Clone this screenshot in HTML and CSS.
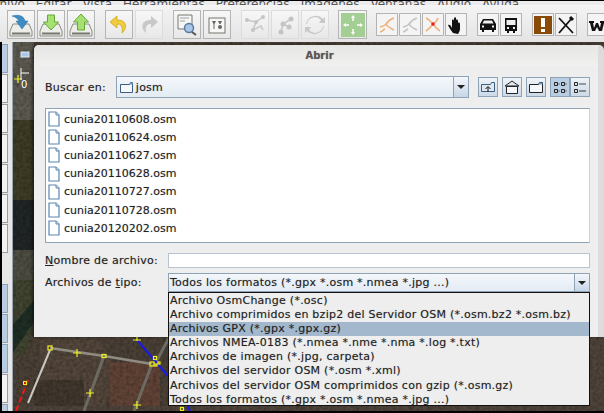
FILE: index.html
```html
<!DOCTYPE html>
<html lang="es">
<head>
    <meta charset="UTF-8">
    <meta name="viewport" content="width=device-width, initial-scale=1.0">
    <title>JOSM - Abrir</title>
    <link rel="stylesheet" href="styles.css">
</head>
<body>

    <svg class="defs" width="0" height="0">
        <symbol id="file" viewBox="0 0 12 16">
            <path d="M1 1h7l3 3v11H1z" fill="#fff" stroke="#5d86b0" stroke-width="1.2"/>
            <path d="M8 1v3h3" fill="#dfe8f2" stroke="#5d86b0"/>
        </symbol>
        <symbol id="drive" viewBox="0 0 26 26">
            <path d="M5 12h16l3 7v5H2v-5z" fill="#ecece8" stroke="#8c8c84"/>
            <rect x="4" y="20.500" width="18" height="2" fill="#77776f"/>
        </symbol>
        <symbol id="split" viewBox="0 0 20 20">
            <path d="M17 3c-3 1-6 3-8 6-1 2-3 2-6 3M9 9c1 2 4 4 8 6M3 17c2 0 3-2 5-3" fill="none" stroke="currentColor" stroke-width="1.600"/>
        </symbol>
    </svg>

    <nav class="menubar">
        <span class="menu-first">Archivo</span>
        <span>Editar</span>
        <span>Vista</span>
        <span>Herramientas</span>
        <span>Preferencias</span>
        <span>Imagenes</span>
        <span>Ventanas</span>
        <span>Audio</span>
        <span>Ayuda</span>
    </nav>

    <div class="toolbar">
        <button class="tool">
            <svg width="26" height="26"><use href="#drive"/><path d="M4 4c7-2 12 0 13 5h3l-6 8-6-8h3c-1-2-3-4-7-5z" fill="#3d8cc4" stroke="#2a6a9c" stroke-width=".5"/></svg>
        </button>
        <button class="tool">
            <svg width="26" height="26"><use href="#drive"/><path d="M9.500 3h7v7h4l-7.500 8-7.500-8h4z" fill="#a6e070" stroke="#66a838"/></svg>
        </button>
        <button class="tool">
            <svg width="26" height="26"><use href="#drive"/><path d="M13 2l7.500 8h-4v8h-7v-8h-4z" fill="#a6e070" stroke="#66a838"/></svg>
        </button>
        <span class="tool-sep"></span>
        <button class="tool">
            <svg width="26" height="26"><path d="M11 4L4 10l7 6v-4c4 0 6 2 5 9 5-4 6-13-5-13z" fill="#f0cc3c" stroke="#d0a820" stroke-width=".8"/></svg>
        </button>
        <button class="tool off">
            <svg width="26" height="26"><path d="M15 4l7 6-7 6v-4c-4 0-6 2-5 9-5-4-6-13 5-13z" fill="#c8c8c8"/></svg>
        </button>
        <span class="tool-sep"></span>
        <button class="tool">
            <svg width="26" height="26"><path d="M4 3h14v14H4z" fill="#f6f6f4" stroke="#77776f"/><path d="M6 6h9M6 9h5" stroke="#a0a0a0"/><circle cx="15" cy="16" r="4.500" fill="#a9c6e8" stroke="#5a7ba0" stroke-width="1.500"/><path d="M18 20l4 3" stroke="#555" stroke-width="2"/></svg>
        </button>
        <button class="tool">
            <svg width="26" height="26"><rect x="5" y="6" width="16" height="15" fill="#f6f6f4" stroke="#77776f"/><path d="M8 9h4l-1.500 3v5h-1v-5zM14 9h4l-1.500 3h-1z" fill="#666"/><circle cx="16" cy="15" r="2" fill="#666"/></svg>
        </button>
        <span class="tool-sep"></span>
        <button class="tool off">
            <svg width="26" height="26"><path d="M5 8l9 2 7-5M14 10l-3 8 8-4 2 4" fill="none" stroke="#c8c8c8" stroke-width="1.500"/><circle cx="5" cy="8" r="2" fill="#c4c4c4"/><circle cx="14" cy="10" r="2" fill="#c4c4c4"/><circle cx="11" cy="18" r="2" fill="#c4c4c4"/><circle cx="21" cy="5" r="2" fill="#c4c4c4"/></svg>
        </button>
        <button class="tool off">
            <svg width="26" height="26"><path d="M9 20l2-8 8-5M11 12l6 3" fill="none" stroke="#c8c8c8" stroke-width="1.500"/><circle cx="9" cy="20" r="2.500" fill="#c4c4c4"/><circle cx="11" cy="12" r="2.500" fill="#c4c4c4"/><circle cx="19" cy="7" r="2.500" fill="#c4c4c4"/><circle cx="17" cy="15" r="2.500" fill="#c4c4c4"/></svg>
        </button>
        <button class="tool off">
            <svg width="26" height="26"><path d="M5 12a8 8 0 0 1 14-4l-2 3h6V5l-2 2A10 10 0 0 0 4 12zM21 14a8 8 0 0 1-14 4l2-3H3v6l2-2a10 10 0 0 0 17-5z" fill="#c8c8c8"/></svg>
        </button>
        <span class="tool-sep small"></span>
        <button class="tool map-tool">
            <svg width="26" height="26"><rect x="1" y="1" width="24" height="24" fill="#a4cf94"/><path d="M13 5v4M13 17v4M5 13h4M17 13h4" stroke="#fff" stroke-width="1.500"/><path d="M13 3l2 3h-4zM13 23l2-3h-4zM3 13l3-2v4zM23 13l-3-2v4z" fill="#fff"/></svg>
        </button>
        <span class="tool-sep small"></span>
        <div class="tool-group">
            <button class="tool mini"><svg width="20" height="20"><use href="#split" class="orange"/></svg></button>
            <button class="tool mini"><svg width="20" height="20"><use href="#split" class="grey"/></svg></button>
            <button class="tool mini"><svg width="20" height="20"><path d="M3 3c3 1 5 4 7 6 2-1 4-3 5-6M10 9c-2 3-4 5-7 7M10 9c2 3 4 5 7 7" fill="none" stroke="#efb27a" stroke-width="1.600"/><circle cx="10" cy="9" r="1.800" fill="#e8202a"/></svg></button>
            <button class="tool mini"><svg width="20" height="20"><path d="M7 18c-2-3-4-5-5-8 1-1 3 0 4 3V5c1-1 2 0 2 1V3c1-1 2-1 2 0v3-1c1-1 2 0 2 1v2c1-1 2 0 2 1v5c0 2-1 3-2 5z" fill="#111"/></svg></button>
        </div>
        <div class="tool-group">
            <button class="tool mini"><svg width="20" height="20"><path d="M2 9l3-5h10l3 5v6h-2v2h-2v-2H6v2H4v-2H2z" fill="#111"/><path d="M6 5.500h8l1.500 3h-11zM4 10.500h2v2H4zM14 10.500h2v2h-2z" fill="#eee"/></svg></button>
            <button class="tool mini"><svg width="20" height="20"><path d="M4 3h12v13h-2v2h-2v-2H8v2H6v-2H4z" fill="#111"/><path d="M5.500 5h9v5h-9zM6 12h2v2H6zM12 12h2v2h-2z" fill="#eee"/></svg></button>
        </div>
        <div class="tool-group">
            <button class="tool mini"><svg width="20" height="20"><rect x="1" y="1" width="18" height="18" fill="#8a4a08"/><rect x="8" y="3" width="4" height="9" fill="#fff"/><rect x="8" y="14" width="4" height="3" fill="#fff"/></svg></button>
            <button class="tool mini"><svg width="20" height="20"><path d="M3 3l14 15M16 3L3 18" stroke="#111" stroke-width="1.800"/><path d="M14 2l3 3" stroke="#111" stroke-width="3"/></svg></button>
        </div>
        <button class="tool mini">
            <svg width="20" height="20"><path d="M1 6h5v2H5l1 5 2-5h2l2 5 1-5h-1V6h5v2h-1l-2 8h-3l-2-4-2 4H4L2 8H1z" fill="#111"/></svg>
        </button>
    </div>

    <div class="workspace">
        <aside class="sidebar">
            <div class="side-btn on"></div>
            <div class="side-btn"></div>
            <div class="side-btn"></div>
            <div class="side-btn"></div>
            <div class="side-btn"></div>
            <div class="side-btn"></div>
            <div class="side-btn gap"></div>
            <div class="side-btn on"></div>
            <div class="side-btn on"></div>
            <div class="side-btn on"></div>
            <div class="side-btn"></div>
            <div class="side-btn on"></div>
        </aside>

        <main class="map">
            <svg class="map-canvas" viewBox="13 42 591 369" preserveAspectRatio="none">
                <defs>
                    <filter id="rough" x="0" y="0" width="100%" height="100%">
                        <feTurbulence type="fractalNoise" baseFrequency="0.3" numOctaves="2" seed="4"/>
                        <feColorMatrix values="0 0 0 0 0  0 0 0 0 0  0 0 0 0 0  0 0 0 1.100 -0.350"/>
                    </filter>
                </defs>
                <rect x="13" y="42" width="591" height="369" fill="#4b4137"/>
                <path d="M13 42h21v95H13z" fill="#5e5c52"/>
                <path d="M13 120h21v80H13z" fill="#3f3d26"/>
                <path d="M13 200h21v50H13z" fill="#212626"/>
                <path d="M13 250h21v30H13z" fill="#4e4e43"/>
                <path d="M13 280h21v40l-8 35H13z" fill="#424530"/>
                <path d="M13 325l21-25v22l-21 30z" fill="#1f2f25"/>
                <path d="M40 340h60l20 40-20 31H40z" fill="#54473c"/>
                <path d="M110 362h50v49h-50z" fill="#624437"/>
                <path d="M34 380h50v31H34z" fill="#42382e"/>
                <path d="M590 337h14v74h-14zM13 406h591v5H13z" fill="#50453c"/>
                <rect x="13" y="42" width="591" height="369" filter="url(#rough)" opacity="0.45"/>

                <path d="M50 350L28 403" stroke="#c9c9c4" stroke-width="2" fill="none"/>
                <path d="M50 348L104 356L152 364" stroke="#8f8c82" stroke-width="2.500" fill="none"/>
                <path d="M104 356L84 411M152 364L134 411M155 364L170 336" stroke="#6c6a62" stroke-width="3" fill="none"/>
                <path d="M137 340L168 376M183 395L190 411" stroke="#1a1ae8" stroke-width="2" fill="none"/>
                <path d="M28 380L16 411" stroke="#f01818" stroke-width="2" stroke-dasharray="6 3" fill="none"/>

                <g fill="none" stroke="#f0f01e" stroke-width="1.200">
                    <rect x="48" y="346" width="4" height="4"/>
                    <rect x="102" y="354.500" width="4" height="3"/>
                    <rect x="150" y="362" width="4" height="4"/>
                    <rect x="153.500" y="356.500" width="3" height="3"/>
                    <rect x="158" y="362" width="2" height="2"/>
                    <rect x="155" y="364" width="2" height="2"/>
                    <rect x="180.500" y="407.500" width="3" height="3"/>
                    <path d="M73 353h8M77 349v8M86 393h8M90 389v8M133 405h8M137 401v8M133 340h8M137 336v5M14 79h8M18 75v8"/>
                </g>
                <rect x="23.500" y="381.500" width="3" height="3" fill="#d41818" stroke="#f0f01e"/>
                <path d="M21 68v12M21 73h8" stroke="#fff" fill="none"/>
                <text class="scale-zero" x="21" y="88">0</text>
                <rect x="21" y="52" width="8" height="5" fill="#aac6e6" stroke="#dfe8f2"/>
            </svg>

            <section class="dialog">
                <h2 class="dialog-title">Abrir</h2>
                <div class="dialog-body">
                    <div class="look-row">
                        <label class="look-label">Buscar en:</label>
                        <div class="combo look-combo">
                            <span class="combo-text">
                                <svg width="13" height="11" viewBox="0 0 13 11"><path d="M.5 2.500h9l1-2h2v10H.5z" fill="#f4f7fb" stroke="#3f5d7c"/><path d="M9.500 2.500l1-2h2v2z" fill="#6e9cd0"/></svg>
                                josm
                            </span>
                            <span class="combo-arrow"></span>
                        </div>
                        <div class="file-tools">
                            <button class="file-tool"><svg width="14" height="13"><path d="M.5 3.500h9l1-2h3v9H.5z" fill="#dfe8f2" stroke="#3f5d7c"/><path d="M7 11V6M4.500 8L7 5.500 9.500 8" stroke="#111" fill="none"/></svg></button>
                            <button class="file-tool"><svg width="16" height="15"><path d="M8 1L1 6h14z" fill="#dfe8f2" stroke="#222"/><path d="M2.500 6.500h11v7h-11z" fill="#f4f7fb" stroke="#222"/></svg></button>
                            <button class="file-tool"><svg width="14" height="13"><path d="M.5 3.500h9l1-2h3v10H.5z" fill="#f4f7fb" stroke="#222"/><path d="M9.500 3.500l1-2h3v2z" fill="#6e9cd0"/></svg></button>
                            <div class="view-pair">
                                <button class="file-tool on"><svg width="14" height="13"><path d="M1.500 1.500h3v3h-3zM8.500 1.500h3v3h-3zM1.500 8.500h3v3h-3zM8.500 8.500h3v3h-3z" fill="none" stroke="#222"/><path d="M5 3h2M12 3h2M5 10h2M12 10h2" stroke="#777"/></svg></button>
                                <button class="file-tool"><svg width="14" height="13"><path d="M1.500 1.500h3v3h-3zM1.500 8.500h3v3h-3z" fill="none" stroke="#222"/><path d="M6 3h7" stroke="#444"/><path d="M6 10h7" stroke="#888" stroke-width="2"/></svg></button>
                            </div>
                        </div>
                    </div>

                    <ul class="file-list">
                        <li><svg width="12" height="16"><use href="#file"/></svg>cunia20110608.osm</li>
                        <li><svg width="12" height="16"><use href="#file"/></svg>cunia20110624.osm</li>
                        <li><svg width="12" height="16"><use href="#file"/></svg>cunia20110627.osm</li>
                        <li><svg width="12" height="16"><use href="#file"/></svg>cunia20110628.osm</li>
                        <li><svg width="12" height="16"><use href="#file"/></svg>cunia20110727.osm</li>
                        <li><svg width="12" height="16"><use href="#file"/></svg>cunia20110728.osm</li>
                        <li><svg width="12" height="16"><use href="#file"/></svg>cunia20120202.osm</li>
                    </ul>

                    <div class="form-row name-row">
                        <label class="form-label"><u>N</u>ombre de archivo:</label>
                        <div class="name-input"></div>
                    </div>

                    <div class="form-row type-row">
                        <label class="form-label">Archivos de <u>t</u>ipo:</label>
                        <div class="type-wrap">
                            <div class="combo type-combo">
                                <span class="combo-text">Todos los formatos (*.gpx *.osm *.nmea *.jpg ...)</span>
                                <span class="combo-arrow"></span>
                            </div>
                            <ul class="type-popup">
                                <li>Archivo OsmChange (*.osc)</li>
                                <li>Archivo comprimidos en bzip2 del Servidor OSM (*.osm.bz2 *.osm.bz)</li>
                                <li class="selected">Archivos GPX (*.gpx *.gpx.gz)</li>
                                <li>Archivos NMEA-0183 (*.nmea *.nme *.nma *.log *.txt)</li>
                                <li>Archivos de imagen (*.jpg, carpeta)</li>
                                <li>Archivos del servidor OSM (*.osm *.xml)</li>
                                <li>Archivos del servidor OSM comprimidos con gzip (*.osm.gz)</li>
                                <li>Todos los formatos (*.gpx *.osm *.nmea *.jpg ...)</li>
                            </ul>
                        </div>
                    </div>
                </div>
            </section>
        </main>
    </div>

</body>
</html>
```

FILE: styles.css
```css
* {
    box-sizing: border-box;
}

html, body {
    height: 100%;
}

body {
    margin: 0;
    display: flex;
    flex-direction: column;
    overflow: hidden;
    background-color: #000;
    font-family: "DejaVu Sans", sans-serif;
    font-size: 11px;
    color: #222;
}

.defs {
    position: absolute;
}

ul {
    margin: 0;
    padding: 0;
    list-style: none;
}

button {
    padding: 0;
    font: inherit;
}

/* Menu, only the bottom of its text is on screen */
.menubar {
    flex: none;
    height: 5px;
    overflow: hidden;
    display: flex;
    align-items: flex-end;
    gap: 11px;
    padding-left: 2px;
    background-color: #ececec;
    border-top: 1px solid #000;
    font-size: 12px;
    line-height: 10px;
    color: #555;
}

.menubar span {
    position: relative;
    top: 4px;
}

.menu-first {
    margin-left: -22px;
}

.toolbar {
    flex: none;
    height: 37px;
    display: flex;
    align-items: center;
    gap: 2px;
    padding: 2px 0 0 7px;
    overflow: hidden;
    background: linear-gradient(#f4f4f4, #e4e4e4);
}

.tool {
    flex: none;
    width: 28px;
    height: 29px;
    display: flex;
    align-items: center;
    justify-content: center;
    background: linear-gradient(#f7f7f7, #e8e8e8);
    border: 1px solid #b4b4b4;
}

.tool.off {
    border-color: #dcdcdc;
}

.tool.map-tool {
    width: 29px;
}

.tool.mini {
    width: 22px;
    height: 23px;
    background: #f4f4f4;
}

.tool-sep {
    flex: none;
    width: 6px;
}

.tool-sep.small {
    width: 5px;
}

.tool-group {
    flex: none;
    display: flex;
    gap: 1px;
    margin-right: 8px;
}

.orange {
    color: #efb27a;
}

.grey {
    color: #c4c4c4;
}

.workspace {
    flex: 1;
    display: flex;
    min-height: 0;
    margin-bottom: 2px;
}

.sidebar {
    flex: none;
    width: 11px;
    margin-left: 2px;
    padding: 2px 4px 0 0;
    display: flex;
    flex-direction: column;
    gap: 1px;
    overflow: hidden;
    background-color: #e6e6e6;
    border-right: 1px solid #9aa6b2;
}

.side-btn {
    flex: none;
    height: 29px;
    background-color: #f2f2f2;
    border: 1px solid #9c9c9c;
    border-left: none;
}

.side-btn.on {
    background-color: #b9cde2;
    border-color: #8ca2b8;
}

.side-btn.gap {
    margin-bottom: 30px;
}

.map {
    flex: 1;
    position: relative;
    min-width: 0;
}

.map-canvas {
    display: block;
    width: 100%;
    height: 100%;
}

.scale-zero {
    font-size: 10px;
    fill: #fff;
}

/* Open dialog over the map */
.dialog {
    position: absolute;
    left: 21px;
    top: 3px;
    right: 0;
    height: 292px;
    background-color: #eeeeee;
    border-right: 6px solid #dcdcdc;
    border-radius: 5px 5px 0 0;
    box-shadow: -2px 0 3px rgba(0, 0, 0, 0.45);
    letter-spacing: 0.25px;
    text-shadow: 0 0 1px rgba(0, 0, 0, 0.3);
}

.dialog-title {
    height: 21px;
    margin: 0;
    padding-left: 7px;
    font-size: 10px;
    font-weight: bold;
    line-height: 21px;
    text-align: center;
    letter-spacing: 0;
    color: #555;
    background: linear-gradient(#e6e6e4, #f0f0ee);
    border-radius: 5px 5px 0 0;
}

.dialog-body {
    padding: 10px 8px 0 11px;
}

.look-row {
    display: flex;
    align-items: center;
    height: 22px;
}

.look-label {
    width: 71px;
}

.combo {
    display: flex;
    align-items: stretch;
    background: linear-gradient(#f4f7fb, #e3ebf3);
    border: 1px solid #8fa3b6;
}

.look-combo {
    width: 354px;
    height: 22px;
}

.combo-text {
    flex: 1;
    display: flex;
    align-items: center;
    gap: 3px;
    padding-left: 3px;
    white-space: nowrap;
}

.combo-arrow {
    flex: none;
    width: 15px;
    display: flex;
    align-items: center;
    justify-content: center;
    background: linear-gradient(#f4f7fb, #c6d6e6);
    border-left: 1px solid #8fa3b6;
}

.combo-arrow::after {
    content: "";
    border-left: 4px solid transparent;
    border-right: 4px solid transparent;
    border-top: 4px solid #222;
}

.file-tools {
    display: flex;
    gap: 4px;
    margin-left: 9px;
}

.view-pair {
    display: flex;
}

.file-tool {
    width: 20px;
    height: 20px;
    display: flex;
    align-items: center;
    justify-content: center;
    background: linear-gradient(#eef3f8, #cbd9e7);
    border: 1px solid #8fa3b6;
}

.file-tool.on {
    background: #b9cde2;
}

.file-list {
    height: 135px;
    margin-top: 10px;
    padding-top: 1px;
    background-color: #fff;
    border: 1px solid #8fa3b6;
    border-right-color: #c8d2dc;
    letter-spacing: 0;
}

.file-list li {
    height: 18.2px;
    display: flex;
    align-items: center;
    gap: 4px;
    padding-left: 2px;
}

.form-row {
    display: flex;
    align-items: center;
}

.form-label {
    flex: none;
    width: 123px;
}

.name-row {
    height: 15px;
    margin-top: 10px;
}

.name-input {
    flex: 1;
    height: 15px;
    background-color: #fff;
    border: 1px solid #b8c4d0;
}

.type-row {
    height: 19px;
    margin-top: 5px;
}

.type-wrap {
    flex: 1;
    position: relative;
}

.type-combo {
    height: 19px;
}

.type-combo .combo-text {
    padding-left: 1px;
}

.type-popup {
    position: absolute;
    left: 0;
    right: 0;
    top: 19px;
    height: 114px;
    padding-top: 1px;
    background-color: #eeeeee;
    border: 1px solid #111;
}

.type-popup li {
    height: 14.1px;
    padding-left: 1px;
    line-height: 14px;
    white-space: nowrap;
}

.type-popup .selected {
    background-color: #a3b8cc;
}
```
